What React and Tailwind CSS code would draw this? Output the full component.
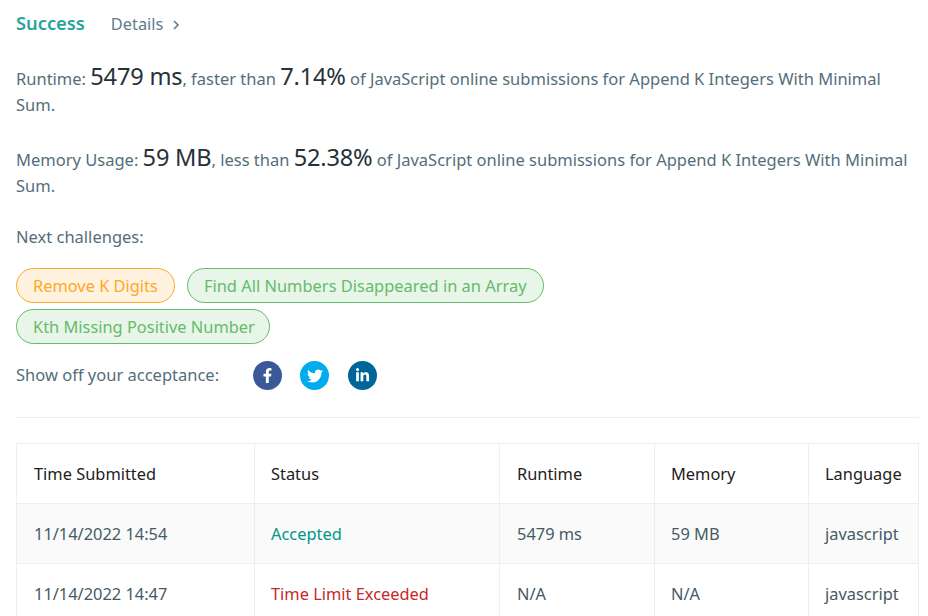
import React from "react";
import { FaFacebookF, FaTwitter, FaLinkedinIn } from "react-icons/fa";

const rows = [
  ["11/14/2022 14:54", "Accepted", "5479 ms", "59 MB", "javascript", "text-[#009688]"],
  ["11/14/2022 14:47", "Time Limit Exceeded", "N/A", "N/A", "javascript", "text-[#c62828]"],
];
const Big = ({ children }) => <span className="text-[23.6px] tracking-[-0.2px] text-[#263238]">{children}</span>;
const green = "flex h-[35px] items-center rounded-[18px] border border-[#66bb6a] bg-[#e8f5e9] pl-[16px] pt-[2px] text-[#66bb6a]";
const pads = ["pl-[17px]", "pl-[16px]", "pl-[17px]", "pl-[16px]", "pl-[16px]"];

export default function App() {
  return (
    <div className="h-[616px] w-[928px] overflow-hidden bg-white pl-4 pr-[9px] font-['Noto_Sans',sans-serif] text-[16.5px] text-[#546e7a]">
      <div className="flex h-[48px] items-center text-[16.4px]">
        <span className="pb-[2px] text-[18.3px] font-semibold text-[#26a69a]">Success</span>
        <span className="ml-[26px] text-[#607d8b]">Details</span>
        <svg className="ml-[9px] mt-[2px]" width="8" height="10" viewBox="0 0 8 10" fill="none" stroke="#607d8b" strokeWidth="1.6"><path d="M2 1l4 4-4 4" /></svg>
      </div>
      <p className="mt-[15px] h-[52px] leading-[26px]">
        Runtime: <Big>5479 ms</Big>, faster than <Big>7.14%</Big> of JavaScript online submissions for Append K Integers With Minimal Sum.
      </p>
      <p className="mt-[29px] h-[52px] leading-[26px]">
        Memory Usage: <Big>59 MB</Big>, less than <Big>52.38%</Big> of JavaScript online submissions for Append K Integers With Minimal Sum.
      </p>
      <p className="mt-[28px] leading-[26px]">Next challenges:</p>
      <div className="mt-[18px] flex gap-x-[12px] text-[16.4px]">
        <span className="flex h-[35px] items-center rounded-[18px] border border-[#ffa726] bg-[#fff3e0] px-[16px] pt-[2px] text-[#ffa726]">Remove K Digits</span>
        <span className={green + " pr-[16px] text-[16.45px]"}>Find All Numbers Disappeared in an Array</span>
      </div>
      <div className="mt-[6px] flex text-[16.4px]">
        <span className={green + " pr-[14px]"}>Kth Missing Positive Number</span>
      </div>
      <div className="mt-[17px] flex h-[29px] items-center">
        <span className="w-[237px]">Show off your acceptance:</span>
        <span className="flex h-[29px] w-[29px] items-center justify-center rounded-full bg-[#3b5998] text-white"><FaFacebookF size={15} /></span>
        <span className="ml-[18px] flex h-[29px] w-[29px] items-center justify-center rounded-full bg-[#00aced] text-white"><FaTwitter size={16} /></span>
        <span className="ml-[19px] flex h-[29px] w-[29px] items-center justify-center rounded-full bg-[#006699] text-white"><FaLinkedinIn size={15} /></span>
      </div>
      <div className="mt-[27px] h-px bg-[#eeeeee]" />
      <table className="mt-[25px] w-[902px] table-fixed border-collapse text-[16.4px]">
        <colgroup>
          <col className="w-[238px]" /><col className="w-[245px]" /><col className="w-[155px]" /><col className="w-[154px]" /><col className="w-[110px]" />
        </colgroup>
        <thead>
          <tr className="h-[60px] text-[#212121]">
            {["Time Submitted", "Status", "Runtime", "Memory", "Language"].map((h, j) => (
              <th key={h} className={"border border-[#eeeeee] pt-[2px] text-left font-normal " + pads[j]}>{h}</th>
            ))}
          </tr>
        </thead>
        <tbody>
          {rows.map((r, i) => (
            <tr key={i} className={i === 0 ? "h-[60px] bg-[#fafafa] text-[#455a64]" : "h-[60px] text-[#455a64]"}>
              <td className="border border-[#eeeeee] pl-[17px] pt-[2px]">{r[0]}</td>
              <td className={"border border-[#eeeeee] pl-[16px] pt-[2px] " + r[5]}>{r[1]}</td>
              <td className="border border-[#eeeeee] pl-[17px] pt-[2px]">{r[2]}</td>
              <td className="border border-[#eeeeee] pl-[16px] pt-[2px]">{r[3]}</td>
              <td className="border border-[#eeeeee] pl-[16px] pt-[2px]">{r[4]}</td>
            </tr>
          ))}
        </tbody>
      </table>
    </div>
  );
}
